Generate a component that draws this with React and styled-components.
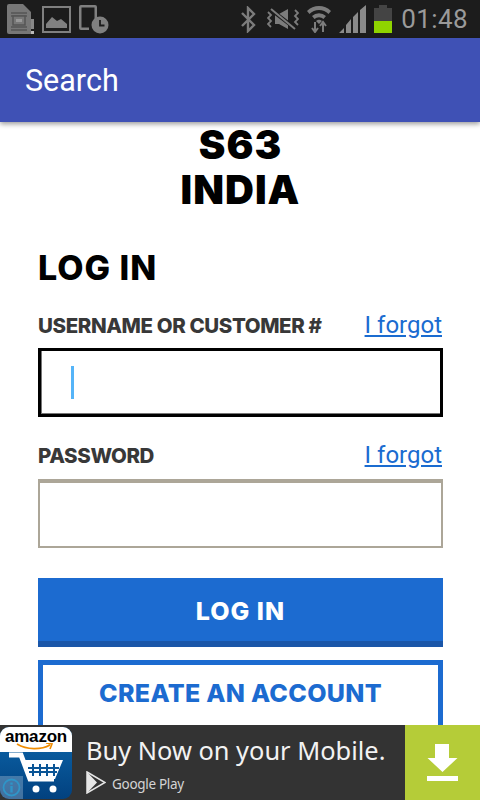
import React from 'react';
import styled, { createGlobalStyle } from 'styled-components';

const GlobalStyle = createGlobalStyle`
	html, body {
		margin: 0;
		padding: 0;
		background: #fff;
	}
	* {
		box-sizing: border-box;
	}
`;

const Screen = styled.div`
	width: 480px;
	height: 800px;
	display: flex;
	flex-direction: column;
	overflow: hidden;
	font-family: 'Inter', sans-serif;
`;

const StatusBar = styled.div`
	height: 38px;
	flex: none;
	display: flex;
	align-items: center;
	justify-content: space-between;
	padding: 0 12px 0 7px;
	background: #1c1c1c;
`;

const StatusGroup = styled.div`
	display: flex;
	align-items: center;
	gap: ${props => props.gap}px;
`;

const Clock = styled.span`
	font-family: 'Roboto', sans-serif;
	font-size: 26px;
	color: #9a9a9a;
	margin-left: 2px;
	letter-spacing: 0.4px;
`;

const AppBar = styled.header`
	position: relative;
	z-index: 1;
	height: 84px;
	flex: none;
	display: flex;
	align-items: center;
	padding: 0 25px;
	background: #3f51b5;
	box-shadow: 0 2px 5px rgba(0, 0, 0, 0.4);
`;

const AppTitle = styled.h1`
	margin: 0;
	font-family: 'Roboto', sans-serif;
	font-size: 30.5px;
	font-weight: 400;
	color: #fff;
`;

const Content = styled.main`
	flex: 1;
	min-height: 0;
	padding: 0 37px 0 38px;
`;

const Store = styled.h2`
	margin: 0;
	font-size: 40px;
	line-height: 45px;
	font-weight: 900;
	letter-spacing: 1px;
	text-align: center;
	color: #000;
`;

const LoginTitle = styled.h3`
	margin: 34px 0 0;
	font-size: 34px;
	line-height: 44px;
	font-weight: 800;
	letter-spacing: 1px;
	color: #000;
`;

const LabelRow = styled.div`
	display: flex;
	align-items: baseline;
	justify-content: space-between;
	height: 28px;
	margin-top: ${props => props.top}px;
`;

const Label = styled.label`
	font-size: 20.5px;
	font-weight: 800;
	letter-spacing: -0.4px;
	line-height: 28px;
	color: #383838;
`;

const ForgotLink = styled.a`
	font-family: 'Roboto', sans-serif;
	font-size: 24px;
	line-height: 28px;
	color: #1a6bd0;
	text-decoration: underline;
	margin-right: 1px;
`;

const Field = styled.div`
	height: 69px;
	margin-top: ${props => (props.focused ? 9 : 10)}px;
	display: flex;
	align-items: center;
	padding-left: 30px;
	background: #fff;
	border-style: solid;
	border-color: ${props => (props.focused ? '#000' : '#aca698')};
	border-width: ${props => (props.focused ? '3px' : '4px 2px 2px 2px')};
	box-shadow: ${props => (props.focused ? 'inset 1px 0 0 #777, inset 0 -1px 0 #777' : 'none')};
`;

const Caret = styled.span`
	width: 3px;
	height: 33px;
	background: #55b4f8;
`;

const SubmitButton = styled.button`
	display: block;
	width: 100%;
	height: 69px;
	margin-top: 30px;
	padding: 2px 0 0;
	border: 0;
	border-bottom: 6px solid #1a56a8;
	background: #1c6bd0;
	font-family: inherit;
	font-size: 25px;
	font-weight: 800;
	letter-spacing: 1px;
	color: #fff;
`;

// runs on under the ad bar, its bottom edge is never seen
const CreateButton = styled.button`
	display: block;
	width: 100%;
	height: 80px;
	margin-top: 13px;
	padding: 0 0 14px;
	border: 5px solid #1c6bd0;
	background: #fff;
	font-family: inherit;
	font-size: 25px;
	font-weight: 800;
	letter-spacing: 0.3px;
	color: #1c6bd0;
`;

const AdBar = styled.footer`
	position: relative;
	z-index: 1;
	height: 75px;
	flex: none;
	display: flex;
	background: #333;
`;

const AdLogo = styled.div`
	width: 72px;
	height: 72px;
	margin-top: 2px;
	flex: none;
	display: flex;
	flex-direction: column;
	align-items: center;
	position: relative;
	overflow: hidden;
	border-radius: 9px;
	background: linear-gradient(#0d68ad, #02417f);
`;

const AdLogoTop = styled.div`
	width: 100%;
	height: 25px;
	padding-top: 1px;
	background: #fff;
	text-align: center;
	font-family: 'Liberation Sans', sans-serif;
	font-size: 17px;
	font-weight: 700;
	line-height: 17px;
	letter-spacing: -0.2px;
	color: #000;
`;

const Smile = styled.svg`
	display: block;
	margin: -2px auto 0;
`;

const InfoBadge = styled.div`
	position: absolute;
	left: 0;
	bottom: 0;
	width: 23px;
	height: 23px;
	display: flex;
	align-items: center;
	justify-content: center;
	background: rgba(255, 255, 255, 0.25);
`;

const AdCopy = styled.div`
	flex: 1;
	padding: 8px 0 0 14px;
`;

const AdHeadline = styled.div`
	font-family: 'Noto Sans', sans-serif;
	font-size: 25.4px;
	line-height: 34px;
	color: #f2f2f2;
`;

const PlayRow = styled.div`
	display: flex;
	align-items: center;
	gap: 6px;
	margin-top: 4px;
`;

const PlayText = styled.span`
	font-family: 'Noto Sans', sans-serif;
	font-size: 13.5px;
	letter-spacing: -0.3px;
	color: #d4d4d4;
	padding-top: 2px;
`;

const DownloadBox = styled.div`
	width: 75px;
	flex: none;
	display: flex;
	align-items: center;
	justify-content: center;
	background: #b5cc38;
`;

const SimIcon = () => (
	<svg width="27" height="30" viewBox="0 0 27 30">
		<path d="M0 2a2 2 0 0 1 2-2h14l8 8v22H2a2 2 0 0 1-2-2z" fill="#777" />
		<path d="M4 9h16M4 12h16M4 23h16M4 26h16" stroke="#555" strokeWidth="1.500" />
		<rect x="6" y="12" width="12" height="9" fill="#777" stroke="#555" strokeWidth="1.500" />
		<rect x="9" y="15" width="6" height="3" fill="#999" />
		<rect x="24" y="15" width="3" height="10" fill="#888" />
		<rect x="24" y="27" width="3" height="3" fill="#bbb" />
	</svg>
);

const PictureIcon = () => (
	<svg width="29" height="27" viewBox="0 0 29 27">
		<rect x="1" y="1" width="27" height="25" fill="none" stroke="#808080" strokeWidth="2" />
		<path d="M4 22v-4l6-7 5 4 4-2 6 5v4z" fill="#808080" />
	</svg>
);

const DeviceClockIcon = () => (
	<svg width="30" height="29" viewBox="0 0 30 29">
		<path d="M2 0h14a2 2 0 0 1 2 2v12h-2.500V2.500h-13v20H10V25H2a2 2 0 0 1-2-2V2a2 2 0 0 1 2-2z" fill="#808080" />
		<circle cx="21" cy="20" r="8.500" fill="#808080" />
		<path d="M21 15v5.500h4.500" fill="none" stroke="#1c1c1c" strokeWidth="1.800" />
	</svg>
);

const BluetoothIcon = () => (
	<svg width="19" height="27" viewBox="0 0 19 27">
		<path d="M1 7l12 12-6 6V2l6 6L1 20" fill="none" stroke="#7c7c7c" strokeWidth="2.400" />
	</svg>
);

const MuteIcon = () => (
	<svg width="32" height="26" viewBox="0 0 32 26">
		<path d="M8 8h4l9-5v20l-9-5H8z" fill="#7c7c7c" />
		<path d="M3 3l26 20" stroke="#1c1c1c" strokeWidth="4" />
		<path d="M4 3l24 20" stroke="#7c7c7c" strokeWidth="2" />
		<path d="M1 6l3 3-3 3 3 3-3 3 3 3M28 4l3 3-3 3 3 3-3 3 3 3" fill="none" stroke="#7c7c7c" strokeWidth="1.800" />
	</svg>
);

const WifiIcon = () => (
	<svg width="26" height="28" viewBox="0 0 26 28">
		<path d="M1 6a17 17 0 0 1 24 0l-2.500 3a13.500 13.500 0 0 0-19 0z" fill="#7c7c7c" />
		<path d="M6 11a10 10 0 0 1 14 0l-2.500 3a6.500 6.500 0 0 0-9 0z" fill="#7c7c7c" />
		<path d="M10 16a4.500 4.500 0 0 1 6 0l-3 3z" fill="#7c7c7c" />
		<path d="M9 17v9M6 23l3 4 3-4M17 27v-9M14 21l3-4 3 4" fill="none" stroke="#7c7c7c" strokeWidth="2" />
	</svg>
);

const SignalIcon = () => (
	<svg width="28" height="28" viewBox="0 0 28 28">
		<path d="M0 28l5-5v5zM7 28v-8l5-6v14zM14 28V12l5-5v21zM21 28V5l6-5v28z" fill="#8a8a8a" />
	</svg>
);

const BatteryIcon = () => (
	<svg width="18" height="28" viewBox="0 0 18 28">
		<path d="M5 0h8v3h5v13H0V3h5z" fill="#444" />
		<rect y="16" width="18" height="12" fill="#8fd400" />
	</svg>
);

const CartIcon = () => (
	<svg width="56" height="43" viewBox="0 0 56 43">
		<path d="M1 3h12l9 24h24" fill="none" stroke="#fff" strokeWidth="5" />
		<path d="M16 8h39l-8 19H22z" fill="#fff" />
		<path d="M25 12v12M32 12v12M39 12v12M46 12v12M20 16h31M21 20h28" stroke="#0a5596" strokeWidth="2" />
		<circle cx="28" cy="37" r="3.500" fill="#fff" />
		<circle cx="45" cy="37" r="3.500" fill="#fff" />
	</svg>
);

const SmileIcon = () => (
	<Smile width="40" height="7" viewBox="0 0 40 7">
		<path d="M1 1c10 6 24 6 33 1M30 0l6 1-2 5" fill="none" stroke="#f08c00" strokeWidth="1.600" />
	</Smile>
);

const InfoIcon = () => (
	<svg width="19" height="19" viewBox="0 0 19 19">
		<circle cx="9.500" cy="9.500" r="8" fill="none" stroke="#2f95c8" strokeWidth="1.800" />
		<rect x="8.300" y="8" width="2.400" height="6.500" fill="#2f95c8" />
		<rect x="8.300" y="4.500" width="2.400" height="2.200" fill="#2f95c8" />
	</svg>
);

const PlayIcon = () => (
	<svg width="20" height="23" viewBox="0 0 20 23">
		<path d="M1 1l18 10.500L1 22z" fill="none" stroke="#e6e6e6" strokeWidth="1.500" />
		<path d="M1 1l10 10.500L1 22z" fill="#e6e6e6" />
	</svg>
);

const DownloadIcon = () => (
	<svg width="31" height="37" viewBox="0 0 31 37">
		<path d="M8 0h14v14h8.500L15.500 28 .5 14H8zM0 32h31v5H0z" fill="#fff" />
	</svg>
);

export default function App() {
	return (
		<Screen>
			<GlobalStyle />
			<StatusBar>
				<StatusGroup gap={8}>
					<SimIcon />
					<PictureIcon />
					<DeviceClockIcon />
				</StatusGroup>
				<StatusGroup gap={7}>
					<BluetoothIcon />
					<MuteIcon />
					<WifiIcon />
					<SignalIcon />
					<BatteryIcon />
					<Clock>01:48</Clock>
				</StatusGroup>
			</StatusBar>
			<AppBar>
				<AppTitle>Search</AppTitle>
			</AppBar>
			<Content>
				<Store>S63<br />INDIA</Store>
				<LoginTitle>LOG IN</LoginTitle>
				<LabelRow top={21}>
					<Label>USERNAME OR CUSTOMER #</Label>
					<ForgotLink>I forgot</ForgotLink>
				</LabelRow>
				<Field focused>
					<Caret />
				</Field>
				<LabelRow top={24}>
					<Label>PASSWORD</Label>
					<ForgotLink>I forgot</ForgotLink>
				</LabelRow>
				<Field />
				<SubmitButton>LOG IN</SubmitButton>
				<CreateButton>CREATE AN ACCOUNT</CreateButton>
			</Content>
			<AdBar>
				<AdLogo>
					<AdLogoTop>
						amazon
						<SmileIcon />
					</AdLogoTop>
					<CartIcon />
					<InfoBadge>
						<InfoIcon />
					</InfoBadge>
				</AdLogo>
				<AdCopy>
					<AdHeadline>Buy Now on your Mobile.</AdHeadline>
					<PlayRow>
						<PlayIcon />
						<PlayText>Google Play</PlayText>
					</PlayRow>
				</AdCopy>
				<DownloadBox>
					<DownloadIcon />
				</DownloadBox>
			</AdBar>
		</Screen>
	);
}
